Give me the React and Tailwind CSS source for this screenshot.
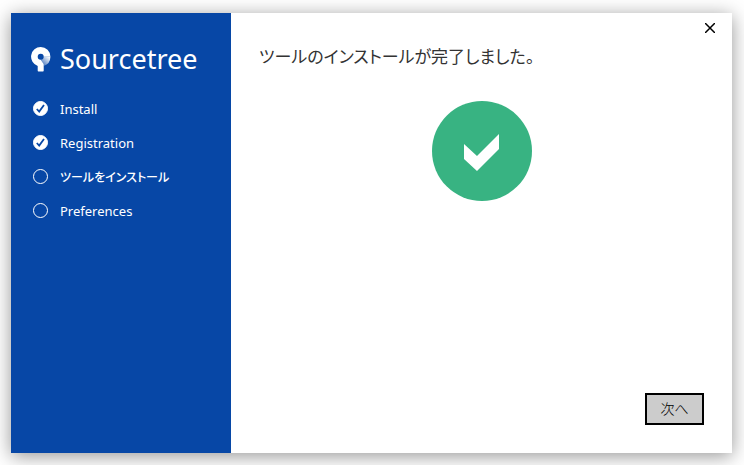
import clsx from "clsx";

const STEPS = [
  { label: "Install", done: true },
  { label: "Registration", done: true },
  { label: "ツールをインストール", current: true },
  { label: "Preferences" },
];

function Logo() {
  return (
    <svg viewBox="0 0 20 25" className="h-[25px] w-5 shrink-0" aria-hidden="true">
      <defs>
        <linearGradient id="fade" x1="18" y1="8" x2="11" y2="16" gradientUnits="userSpaceOnUse">
          <stop offset="0.1" stopColor="#fff" />
          <stop offset="1" stopColor="#fff" stopOpacity="0.35" />
        </linearGradient>
      </defs>
      <path
        fill="#fff"
        d="M9.7 0a9.7 9.7 0 0 1 9.7 9.7H12.7a3 3 0 1 0-3 3L12.7 17v6.8a.7.7 0 0 1-.7.7H7.4a.7.7 0 0 1-.7-.7V18.9A9.7 9.7 0 0 1 9.7 0z"
      />
      <path fill="url(#fade)" d="M19.4 9.7A9.7 9.7 0 0 1 12.7 18.9V17L9.7 12.7a3 3 0 0 0 3-3z" />
    </svg>
  );
}

function StepIcon({ done }) {
  return (
    <svg viewBox="0 0 15 15" className="size-[15px] shrink-0" aria-hidden="true">
      <circle cx="7.5" cy="7.5" r="7" fill={done ? "#fff" : "none"} stroke="#fff" strokeWidth="1" />
      {done && <path d="M3.8 8 6.2 10.5 11 4" fill="none" stroke="#0747a6" strokeWidth="1.8" />}
    </svg>
  );
}

function Sidebar() {
  return (
    <aside className="w-[220px] shrink-0 bg-[#0747a6] px-5 pt-7 text-white">
      <div className="flex items-center gap-[9px]">
        <Logo />
        <span className="text-[27px] leading-9">Sourcetree</span>
      </div>
      <ol className="mt-6 pl-[2px]">
        {STEPS.map((step) => (
          <li
            key={step.label}
            aria-current={step.current ? "step" : undefined}
            className={clsx(
              "flex h-[34px] items-start gap-3",
              step.current ? "text-[12px] leading-[18px] font-medium" : "text-[13px] leading-4"
            )}
          >
            <StepIcon done={step.done} />
            {step.label}
          </li>
        ))}
      </ol>
    </aside>
  );
}

export default function App() {
  return (
    <div className="h-screen bg-white pt-[13px] pr-3 pb-3 pl-[11px] font-['Noto_Sans','Noto_Sans_CJK_JP',sans-serif] [font-feature-settings:'palt']">
      <div className="flex h-full bg-white shadow-[0_3px_18px_rgba(0,0,0,0.42)]">
        <Sidebar />
        <main className="flex flex-1 flex-col px-7 pb-7">
          <div className="-mr-4 flex h-[30px] items-center justify-end">
            <button type="button" aria-label="Close" className="p-[5px]">
              <svg viewBox="0 0 10 10" className="size-[10px]" fill="none" stroke="#000" strokeWidth="1.5">
                <path d="M0 0 10 10M10 0 0 10" />
              </svg>
            </button>
          </div>
          <h1 className="text-[17px] leading-7 text-[#333]">ツールのインストールが完了しました。</h1>
          <svg viewBox="0 0 100 100" className="mt-[30px] size-[100px] self-center" aria-hidden="true">
            <circle cx="50" cy="50" r="50" fill="#38b382" />
            <path d="M32 43 45 55 67 33V48L45 70 32 58z" fill="#fff" />
          </svg>
          <button
            type="button"
            className="mt-auto h-8 w-[59px] self-end border-2 border-black bg-[#ccc] pb-[2px] text-[14px] font-light text-black"
          >
            次へ
          </button>
        </main>
      </div>
    </div>
  );
}
